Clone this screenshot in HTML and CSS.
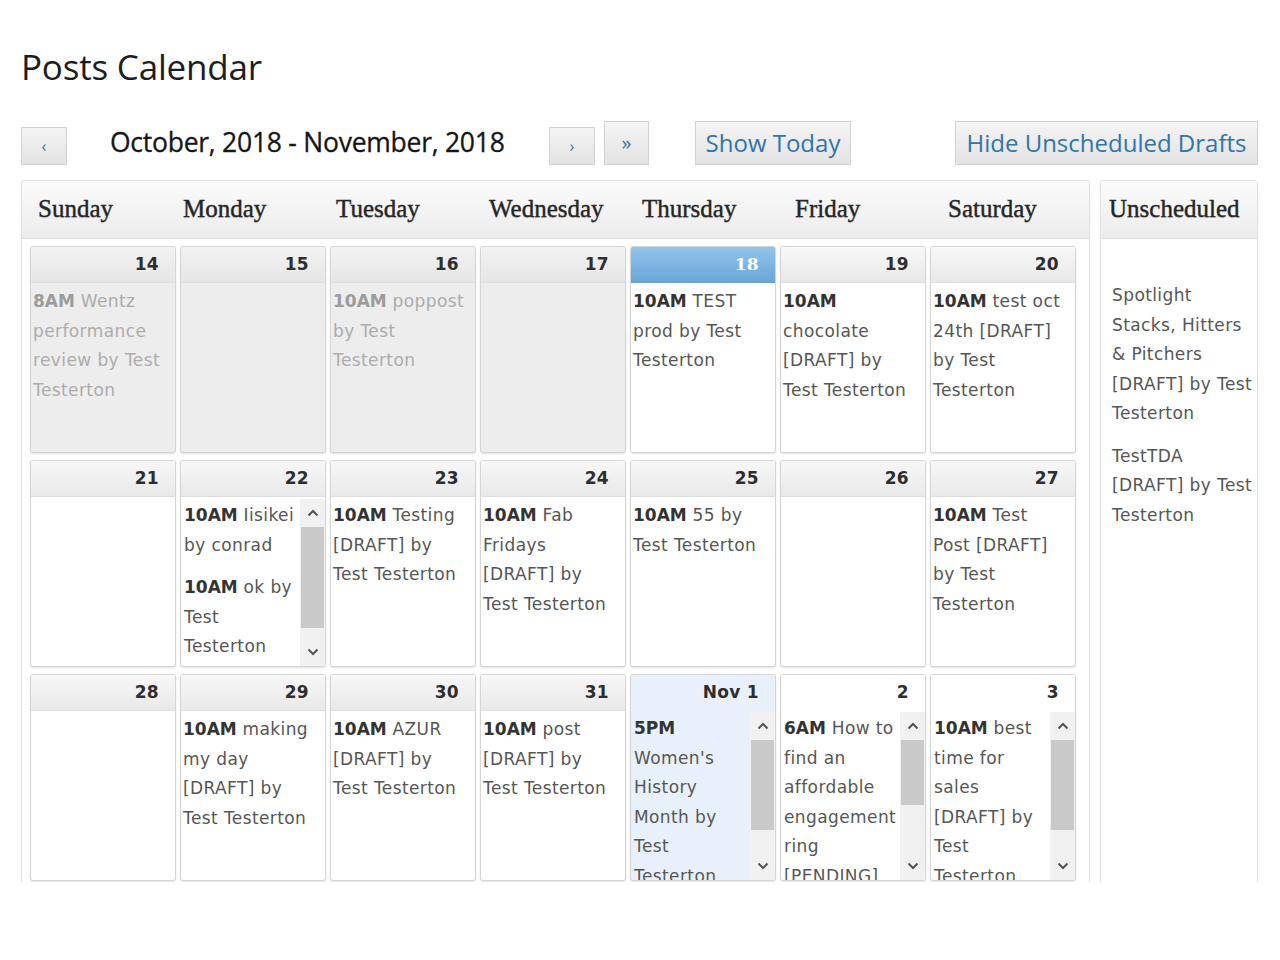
FILE: index.html
```html
<!DOCTYPE html>
<html lang="en">
<head>
<meta charset="utf-8">
<title>Posts Calendar</title>
<link rel="stylesheet" href="styles.css">
</head>
<body>
<div class="page">
  <h1 class="title">Posts Calendar</h1>

  <div class="toolbar">
    <button class="btn btn-arrow btn-prev">&lsaquo;</button>
    <div class="range">October, 2018 - November, 2018</div>
    <button class="btn btn-arrow btn-next">&rsaquo;</button>
    <button class="btn btn-arrow btn-fast">&raquo;</button>
    <button class="btn btn-text btn-today">Show Today</button>
    <button class="btn btn-text btn-hide">Hide Unscheduled Drafts</button>
  </div>

  <div class="calwrap">
    <div class="cal">
      <div class="cal-head">
        <div class="dname first">Sunday</div>
        <div class="dname">Monday</div>
        <div class="dname">Tuesday</div>
        <div class="dname">Wednesday</div>
        <div class="dname">Thursday</div>
        <div class="dname">Friday</div>
        <div class="dname">Saturday</div>
      </div>
      <div class="grid">
        <!-- row 1 -->
        <div class="cell past">
          <div class="dh">14</div>
          <div class="db"><p class="ev"><b>8AM</b> Wentz performance review by Test Testerton</p></div>
        </div>
        <div class="cell past">
          <div class="dh">15</div>
          <div class="db"></div>
        </div>
        <div class="cell past">
          <div class="dh">16</div>
          <div class="db"><p class="ev"><b>10AM</b> poppost by Test Testerton</p></div>
        </div>
        <div class="cell past">
          <div class="dh">17</div>
          <div class="db"></div>
        </div>
        <div class="cell today">
          <div class="dh">18</div>
          <div class="db"><p class="ev"><b>10AM</b> TEST prod by Test Testerton</p></div>
        </div>
        <div class="cell">
          <div class="dh">19</div>
          <div class="db"><p class="ev"><b>10AM</b> chocolate [DRAFT] by Test Testerton</p></div>
        </div>
        <div class="cell">
          <div class="dh">20</div>
          <div class="db"><p class="ev"><b>10AM</b> test oct 24th [DRAFT] by Test Testerton</p></div>
        </div>

        <!-- row 2 -->
        <div class="cell">
          <div class="dh">21</div>
          <div class="db"></div>
        </div>
        <div class="cell">
          <div class="dh">22</div>
          <div class="db scroll">
            <div class="sc">
              <p class="ev"><b>10AM</b> Iisikei by conrad</p>
              <p class="ev"><b>10AM</b> ok by Test Testerton</p>
            </div>
            <div class="sb">
              <div class="arr"><svg width="12" height="8" viewBox="0 0 12 8"><polyline points="1.5,6.5 6,2 10.5,6.5" fill="none" stroke="#555" stroke-width="2"/></svg></div>
              <div class="track"><div class="thumb" style="height:101px"></div></div>
              <div class="arr"><svg width="12" height="8" viewBox="0 0 12 8"><polyline points="1.5,1.5 6,6 10.5,1.5" fill="none" stroke="#555" stroke-width="2"/></svg></div>
            </div>
          </div>
        </div>
        <div class="cell">
          <div class="dh">23</div>
          <div class="db"><p class="ev"><b>10AM</b> Testing [DRAFT] by Test Testerton</p></div>
        </div>
        <div class="cell">
          <div class="dh">24</div>
          <div class="db"><p class="ev"><b>10AM</b> Fab Fridays [DRAFT] by Test Testerton</p></div>
        </div>
        <div class="cell">
          <div class="dh">25</div>
          <div class="db"><p class="ev"><b>10AM</b> 55 by Test Testerton</p></div>
        </div>
        <div class="cell">
          <div class="dh">26</div>
          <div class="db"></div>
        </div>
        <div class="cell">
          <div class="dh">27</div>
          <div class="db"><p class="ev"><b>10AM</b> Test Post [DRAFT] by Test Testerton</p></div>
        </div>

        <!-- row 3 -->
        <div class="cell">
          <div class="dh">28</div>
          <div class="db"></div>
        </div>
        <div class="cell">
          <div class="dh">29</div>
          <div class="db"><p class="ev"><b>10AM</b> making my day [DRAFT] by Test Testerton</p></div>
        </div>
        <div class="cell">
          <div class="dh">30</div>
          <div class="db"><p class="ev"><b>10AM</b> AZUR [DRAFT] by Test Testerton</p></div>
        </div>
        <div class="cell">
          <div class="dh">31</div>
          <div class="db"><p class="ev"><b>10AM</b> post [DRAFT] by Test Testerton</p></div>
        </div>
        <div class="cell nov first-nov">
          <div class="dh">Nov 1</div>
          <div class="db scroll">
            <div class="sc">
              <p class="ev"><b>5PM</b> Women's History Month by Test Testerton</p>
            </div>
            <div class="sb">
              <div class="arr"><svg width="12" height="8" viewBox="0 0 12 8"><polyline points="1.5,6.5 6,2 10.5,6.5" fill="none" stroke="#555" stroke-width="2"/></svg></div>
              <div class="track"><div class="thumb" style="height:90px"></div></div>
              <div class="arr"><svg width="12" height="8" viewBox="0 0 12 8"><polyline points="1.5,1.5 6,6 10.5,1.5" fill="none" stroke="#555" stroke-width="2"/></svg></div>
            </div>
          </div>
        </div>
        <div class="cell nov">
          <div class="dh">2</div>
          <div class="db scroll">
            <div class="sc">
              <p class="ev"><b>6AM</b> How to find an affordable engagement ring [PENDING] by Test Testerton</p>
            </div>
            <div class="sb">
              <div class="arr"><svg width="12" height="8" viewBox="0 0 12 8"><polyline points="1.5,6.5 6,2 10.5,6.5" fill="none" stroke="#555" stroke-width="2"/></svg></div>
              <div class="track"><div class="thumb" style="height:65px"></div></div>
              <div class="arr"><svg width="12" height="8" viewBox="0 0 12 8"><polyline points="1.5,1.5 6,6 10.5,1.5" fill="none" stroke="#555" stroke-width="2"/></svg></div>
            </div>
          </div>
        </div>
        <div class="cell nov">
          <div class="dh">3</div>
          <div class="db scroll">
            <div class="sc">
              <p class="ev"><b>10AM</b> best time for sales [DRAFT] by Test Testerton</p>
            </div>
            <div class="sb">
              <div class="arr"><svg width="12" height="8" viewBox="0 0 12 8"><polyline points="1.5,6.5 6,2 10.5,6.5" fill="none" stroke="#555" stroke-width="2"/></svg></div>
              <div class="track"><div class="thumb" style="height:90px"></div></div>
              <div class="arr"><svg width="12" height="8" viewBox="0 0 12 8"><polyline points="1.5,1.5 6,6 10.5,1.5" fill="none" stroke="#555" stroke-width="2"/></svg></div>
            </div>
          </div>
        </div>
      </div>
    </div>

    <div class="unsched">
      <div class="uhead">Unscheduled</div>
      <div class="ubody">
        <p class="ev">Spotlight Stacks, Hitters &amp; Pitchers [DRAFT] by Test Testerton</p>
        <p class="ev">TestTDA [DRAFT] by Test Testerton</p>
      </div>
    </div>
  </div>
</div>
</body>
</html>
```

FILE: styles.css
```css
html, body {
  margin: 0;
  padding: 0;
  background: #fff;
}

.page {
  padding: 0 22px 0 21px;
  font-family: "Open Sans", "Noto Sans", sans-serif;
  color: #222;
}

.title {
  margin: 0;
  padding-top: 43px;
  height: 78px;
  box-sizing: border-box;
  font-family: "Open Sans", "Noto Sans", sans-serif;
  font-weight: 400;
  font-size: 35px;
  line-height: 48px;
  color: #1d1d1d;
  letter-spacing: -0.2px;
}

/* ---------- toolbar ---------- */
.toolbar {
  display: flex;
  align-items: flex-end;
  height: 44px;
  margin-top: 43px;
}

.btn {
  box-sizing: border-box;
  border: 1px solid #d2d2d2;
  background: linear-gradient(#f4f4f4, #e3e3e3);
  color: #2f74b0;
  font-family: "Open Sans", "Noto Sans", sans-serif;
  padding: 0;
  margin: 0;
  cursor: pointer;
  white-space: nowrap;
}

.btn-arrow {
  height: 38px;
  width: 46px;
  font-size: 16px;
  line-height: 36px;
}

.btn-fast {
  height: 44px;
  width: 45px;
  margin-left: 9px;
  font-size: 20px;
  line-height: 40px;
}

.range {
  box-sizing: border-box;
  width: 482px;
  height: 44px;
  padding-left: 43px;
  font-size: 26.5px;
  font-weight: 500;
  line-height: 42px;
  color: #161616;
  white-space: nowrap;
  letter-spacing: -0.25px;
  -webkit-text-stroke: 0.3px #161616;
}

.btn-text {
  height: 44px;
  font-size: 24px;
  line-height: 40px;
}

.btn-today {
  width: 156px;
  margin-left: 46px;
}

.btn-hide {
  width: 303px;
  margin-left: auto;
}

/* ---------- calendar ---------- */
.calwrap {
  display: flex;
  gap: 10px;
  margin-top: 15px;
  align-items: flex-start;
}

.cal {
  box-sizing: border-box;
  width: 1069px;
  height: 702px;
  border: 1px solid #e2e2e2;
  border-bottom: none;
  border-radius: 4px 4px 0 0;
  box-shadow: 0 0 2px rgba(0,0,0,0.08);
  overflow: hidden;
  background: #fff;
}

.cal-head {
  display: flex;
  height: 57px;
  padding-left: 8px;
  background: linear-gradient(#fbfbfb, #ececec);
  border-bottom: 1px solid #dcdcdc;
}

.dname {
  flex: 0 0 153px;
  font-family: "Liberation Serif", "Times New Roman", serif;
  font-size: 25px;
  line-height: 56px;
  color: #262626;
  -webkit-text-stroke: 0.35px #262626;
  text-shadow: 0 1px 1px rgba(0,0,0,0.15);
}

.dname.first {
  padding-left: 8px;
  flex-basis: 145px;
}

.grid {
  display: grid;
  grid-template-columns: repeat(7, 146px);
  grid-template-rows: repeat(3, 207px);
  column-gap: 4px;
  row-gap: 7px;
  padding: 7px 0 0 8px;
}

.cell {
  box-sizing: border-box;
  display: flex;
  flex-direction: column;
  border: 1px solid #d5d5d5;
  border-radius: 3px;
  box-shadow: 0 1px 2px rgba(0,0,0,0.12);
  background: #fff;
  overflow: hidden;
  font-family: "DejaVu Sans", Verdana, sans-serif;
}

.dh {
  flex: 0 0 35px;
  box-sizing: border-box;
  text-align: right;
  padding-right: 16px;
  font-weight: 700;
  font-size: 17px;
  line-height: 35px;
  color: #2e2e2e;
  background: linear-gradient(#f7f7f7, #e9e9e9);
  border-bottom: 1px solid #dedede;
  letter-spacing: 0.3px;
}

.db {
  flex: 1;
  min-height: 0;
  box-sizing: border-box;
  padding: 4px 8px 0 2px;
  overflow: hidden;
}

.ev {
  margin: 0 0 13px 0;
  font-family: "DejaVu Sans", Verdana, sans-serif;
  font-size: 17px;
  line-height: 29.5px;
  letter-spacing: 0.4px;
  color: #565656;
}

.ev b {
  color: #333;
  font-weight: 700;
  letter-spacing: 0;
}

/* past days */
.cell.past {
  background: #ededed;
}
.cell.past .dh {
  background: linear-gradient(#f2f2f2, #e6e6e6);
}
.cell.past .ev {
  color: #acacac;
}
.cell.past .ev b {
  color: #9c9c9c;
}

/* today */
.cell.today .dh {
  background: linear-gradient(#92c3ea, #6aa7d8);
  color: #fff;
  border-bottom-color: #6aa0cc;
  font-family: "DejaVu Serif", serif;
}

/* next month */
.cell.nov .dh {
  background: #fff;
  border-bottom: none;
}
.cell.first-nov,
.cell.first-nov .dh {
  background: #e8f1fb;
}

/* scrolling cells */
.db.scroll {
  display: flex;
  padding: 2px 0 0 0;
}

.sc {
  flex: 1;
  min-width: 0;
  overflow: hidden;
  padding: 2px 2px 0 3px;
}

.sb {
  flex: 0 0 25px;
  display: flex;
  flex-direction: column;
  background: #f1f1f1;
}

.arr {
  flex: 0 0 28px;
  display: flex;
  align-items: center;
  justify-content: center;
}

.track {
  flex: 1;
  min-height: 0;
}

.thumb {
  background: #c9c9c9;
  margin: 0 1px;
}

/* ---------- unscheduled ---------- */
.unsched {
  box-sizing: border-box;
  width: 158px;
  height: 702px;
  border: 1px solid #e2e2e2;
  border-bottom: none;
  border-radius: 4px 4px 0 0;
  box-shadow: 0 0 2px rgba(0,0,0,0.08);
  display: flex;
  flex-direction: column;
}

.uhead {
  flex: 0 0 57px;
  padding-left: 8px;
  font-family: "Liberation Serif", "Times New Roman", serif;
  font-size: 25px;
  line-height: 56px;
  color: #262626;
  -webkit-text-stroke: 0.35px #262626;
  text-shadow: 0 1px 1px rgba(0,0,0,0.15);
  background: linear-gradient(#fbfbfb, #ececec);
  border-bottom: 1px solid #dcdcdc;
}

.ubody {
  flex: 1;
  padding: 42px 2px 0 11px;
}

.ubody .ev {
  font-size: 17px;
}
```
